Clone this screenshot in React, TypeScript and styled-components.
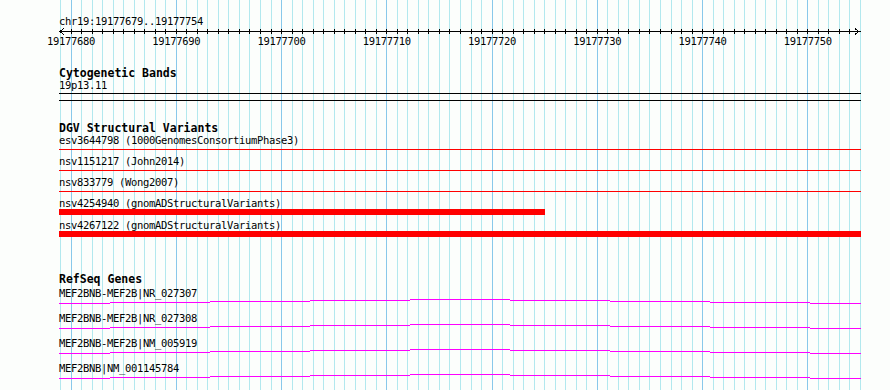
import styled, { createGlobalStyle } from "styled-components"

const VIEW_START = 19177679
const VIEW_END = 19177754
const BP_COUNT = VIEW_END - VIEW_START + 1
const GRID_LEFT = 60
const GRID_WIDTH = 800
const TRACK_LEFT = 59
const TRACK_WIDTH = 802
const PX_PER_BP = GRID_WIDTH / BP_COUNT

const bpToX = (bp: number) => GRID_LEFT + (bp - VIEW_START) * PX_PER_BP

const variants = [
    { id: "esv3644798", study: "1000GenomesConsortiumPhase3", end: Infinity, thick: false },
    { id: "nsv1151217", study: "John2014", end: Infinity, thick: false },
    { id: "nsv833779", study: "Wong2007", end: Infinity, thick: false },
    { id: "nsv4254940", study: "gnomADStructuralVariants", end: 19177725, thick: true },
    { id: "nsv4267122", study: "gnomADStructuralVariants", end: Infinity, thick: true },
]

const genes = [
    "MEF2BNB-MEF2B|NR_027307",
    "MEF2BNB-MEF2B|NR_027308",
    "MEF2BNB-MEF2B|NM_005919",
    "MEF2BNB|NM_001145784",
]

// pixel breaks of the gene model and the 1px step of each piece
const geneBreaks = [59, 110, 210, 310, 410, 510, 610, 710, 810, 861]
const geneSteps = [4, 3, 2, 1, 0, 1, 2, 3, 4]

const GlobalStyle = createGlobalStyle`
    body {
        margin: 0;
        background: #fcfefc;
    }
`

const Page = styled.div`
    position: relative;
    width: 890px;
    height: 390px;
    overflow: hidden;
    background: #fcfefc;
    color: #000;
    font-family: "DejaVu Sans Mono", "Liberation Mono", monospace;
`

const GridLayer = styled.svg`
    position: absolute;
    inset: 0;
    pointer-events: none;
`

const Content = styled.div`
    position: relative;
    width: ${TRACK_WIDTH}px;
    padding: 15px 0 0 ${TRACK_LEFT}px;
`

const PlainText = styled.div`
    font-size: 10.5px;
    letter-spacing: -0.32px;
    line-height: 12px;
    height: 12px;
    white-space: nowrap;
`

const TrackTitle = styled.div<{ $top: number }>`
    margin-top: ${p => p.$top}px;
    margin-bottom: ${p => (p.$top > 25 ? 2 : 0)}px;
    font-size: 11.5px;
    font-weight: bold;
    line-height: 12px;
    height: 12px;
    white-space: nowrap;
`

const RulerLine = styled.svg`
    display: block;
    width: ${TRACK_WIDTH}px;
    height: 8px;
    shape-rendering: crispEdges;
`

const TickLabels = styled.div`
    position: relative;
    height: 12px;
    font-size: 10.5px;
    letter-spacing: -0.32px;
    line-height: 12px;
`

const TickLabel = styled.span`
    position: absolute;
    top: 0;
    transform: translateX(-50%);
    white-space: nowrap;
`

const Band = styled.div`
    box-sizing: border-box;
    margin-top: 2px;
    height: 8px;
    border-top: 1px solid #000;
    border-bottom: 1px solid #000;
`

const FeatureRow = styled.div`
    display: flow-root;
`

const VariantGlyph = styled.div<{ $thick: boolean }>`
    box-sizing: border-box;
    height: 6px;
    padding-top: ${p => (p.$thick ? 0 : 3)}px;
    margin-bottom: ${p => (p.$thick ? 4 : 3)}px;
`

const VariantBar = styled.div<{ $thick: boolean }>`
    height: ${p => (p.$thick ? 6 : 1)}px;
    background: #ff0000;
`

const GeneGlyph = styled.svg`
    display: block;
    width: ${TRACK_WIDTH}px;
    height: 13px;
    shape-rendering: crispEdges;
`

const Grid = () => {
    const lines = []
    for (let i = 0; i <= BP_COUNT; i++) {
        const x = Math.round(GRID_LEFT + i * PX_PER_BP)
        const major = (VIEW_START + i) % 10 === 0
        lines.push(<rect key={i} x={x} y={0} width={1} height={390} fill={major ? "#88c8ea" : "#b2e8ee"} />)
    }
    return <GridLayer width={890} height={390} shapeRendering="crispEdges">{lines}</GridLayer>
}

const Ruler = () => {
    const ticks = []
    for (let i = 1; i < BP_COUNT; i++) {
        const x = Math.round(GRID_LEFT + i * PX_PER_BP) - TRACK_LEFT
        ticks.push(<rect key={i} x={x} y={2} width={1} height={5} fill="#000" />)
    }
    const w = TRACK_WIDTH
    return <RulerLine viewBox={`0 0 ${w} 8`}>
        <rect x={0} y={4} width={w} height={1} fill="#000" />
        {ticks}
        <path d="M5 1.5 L1 4.5 L5 7.5" fill="none" stroke="#000" strokeWidth={1} />
        <path d={`M${w - 6} 1.5 L${w - 2} 4.5 L${w - 6} 7.5`} fill="none" stroke="#000" strokeWidth={1} />
    </RulerLine>
}

const labels: number[] = []
for (let bp = VIEW_START; bp <= VIEW_END; bp++) if (bp % 10 === 0) labels.push(bp)

export default function App() {
    return <Page>
        <GlobalStyle />
        <Grid />
        <Content>
            <PlainText>chr19:{VIEW_START}..{VIEW_END}</PlainText>
            <Ruler />
            <TickLabels>
                {labels.map(bp => <TickLabel key={bp} style={{ left: bpToX(bp) - TRACK_LEFT + 0.5 }}>{bp}</TickLabel>)}
            </TickLabels>

            <TrackTitle $top={20}>Cytogenetic Bands</TrackTitle>
            <PlainText>19p13.11</PlainText>
            <Band />

            <TrackTitle $top={21}>DGV Structural Variants</TrackTitle>
            {variants.map(v => {
                const right = v.end === Infinity ? TRACK_LEFT + TRACK_WIDTH : Math.round(bpToX(v.end) + 1)
                return <FeatureRow key={v.id}>
                    <PlainText>{v.id} ({v.study})</PlainText>
                    <VariantGlyph $thick={v.thick}>
                        <VariantBar $thick={v.thick} style={{ width: right - TRACK_LEFT }} />
                    </VariantGlyph>
                </FeatureRow>
            })}

            <TrackTitle $top={32}>RefSeq Genes</TrackTitle>
            {genes.map(name => <FeatureRow key={name}>
                <PlainText>{name}</PlainText>
                <GeneGlyph viewBox={`0 0 ${TRACK_WIDTH} 13`}>
                    {geneSteps.map((dy, i) => <rect key={i}
                        x={geneBreaks[i] - TRACK_LEFT}
                        y={dy}
                        width={geneBreaks[i + 1] - geneBreaks[i]}
                        height={1}
                        fill="#ff00ff" />)}
                </GeneGlyph>
            </FeatureRow>)}
        </Content>
    </Page>
}
